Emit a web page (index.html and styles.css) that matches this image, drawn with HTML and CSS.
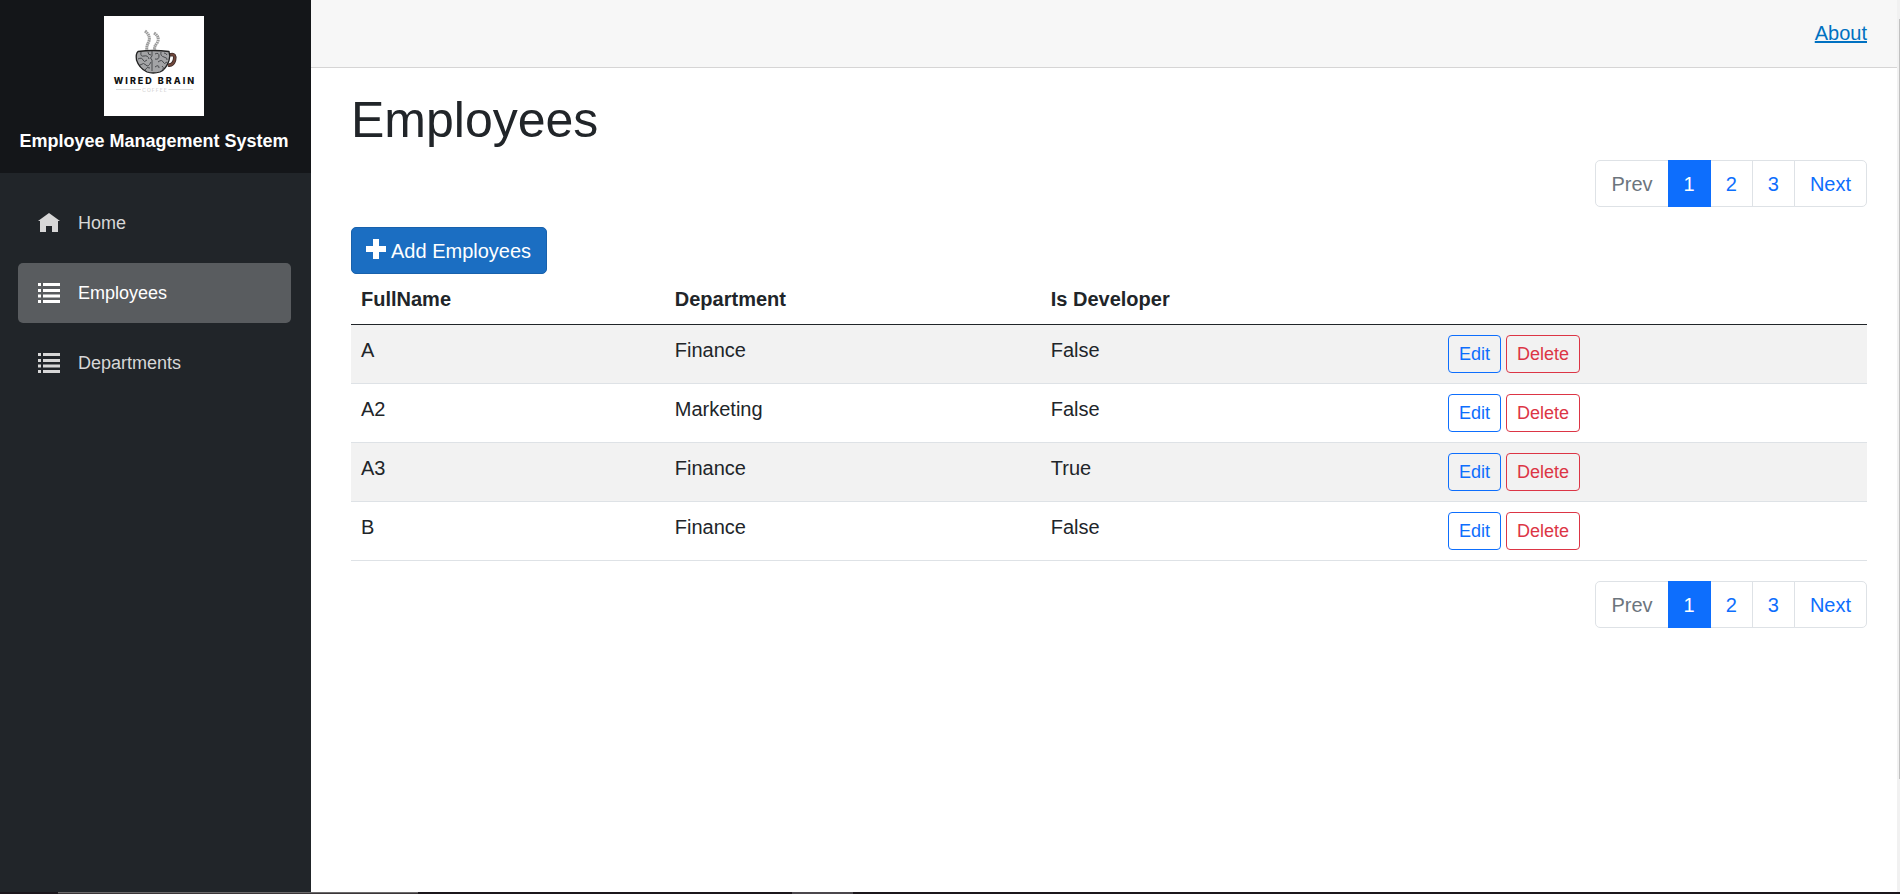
FILE: index.html
```html
<!DOCTYPE html>
<html lang="en">
<head>
<meta charset="utf-8">
<title>Employees</title>
<link rel="stylesheet" href="styles.css">
</head>
<body>
<div class="page">
  <aside class="sidebar">
    <div class="brand">
      <svg class="brand-logo" viewBox="0 0 100 100" role="img" aria-label="Wired Brain Coffee">
        <rect width="100" height="100" fill="#fff"/>
        <g fill="none" stroke="#9b9b9b" stroke-width="3" stroke-dasharray="1.6 .5">
          <path d="M41 15c4 3 5 7 4 10s-3 5-2 10"/>
          <path d="M50 17c5 3 5 7 3 10s-3 4-2 8"/>
        </g>
        <path d="M66 39c4-1.500 5.500 1 4.500 5s-3 5.500-6.500 5" fill="none" stroke="#3a2a28" stroke-width="3.600"/>
        <path d="M66 39c4-1.500 5.500 1 4.500 5s-3 5.500-6.500 5" fill="none" stroke="#70483c" stroke-width="2"/>
        <path d="M34 35.500q15-2 31 0 1.500 4 0 9-3 9-9 11.500-7 2-13 0-8-4-10.500-12-1-6 1.500-8.500z" fill="#a3a4a6" stroke="#222" stroke-width="1.300"/>
        <path d="M37 36q-1 5 3 4t5 3M34 43q4-2 5 1t4 0M36 49q4-3 6 0t5-3M41 54q2-4 5-2M48 35v5q-3 2 0 4v11M51 38q4-2 4 2t-4 3M57 36q-1 4 3 5t3 3M54 46q4-3 5 0t4 0M51 51q4-3 4 1M58 50q2 1 1 4M44 36q0 3 3 3M60 37q2 0 3 2" fill="none" stroke="#484a4d" stroke-width="1"/>
        <text class="logo-name" x="51" y="68" text-anchor="middle">WIRED BRAIN</text>
        <path d="M12 73.500h25M64.500 73.500H89" stroke="#ddd" stroke-width="1"/>
        <text class="logo-sub" x="51" y="76" text-anchor="middle">COFFEE</text>
      </svg>
      <a class="brand-title" href="#">Employee Management System</a>
    </div>
    <nav class="menu" aria-label="Main">
      <a class="menu-link" href="#">
        <svg class="menu-icon" viewBox="0 0 22 22" aria-hidden="true"><path d="M11 1 0 9h2v11h6v-6h6v6h6V9h2z"/></svg>
        Home
      </a>
      <a class="menu-link menu-link-active" href="#" aria-current="page">
        <svg class="menu-icon" viewBox="0 0 22 22" aria-hidden="true"><path d="M0 1h3v3H0zM5 1h17v3H5zM0 7h3v3H0zM5 7h17v3H5zM0 12.500h3v3H0zM5 12.500h17v3H5zM0 18h3v3H0zM5 18h17v3H5z"/></svg>
        Employees
      </a>
      <a class="menu-link" href="#">
        <svg class="menu-icon" viewBox="0 0 22 22" aria-hidden="true"><path d="M0 1h3v3H0zM5 1h17v3H5zM0 7h3v3H0zM5 7h17v3H5zM0 12.500h3v3H0zM5 12.500h17v3H5zM0 18h3v3H0zM5 18h17v3H5z"/></svg>
        Departments
      </a>
    </nav>
  </aside>
  <main class="main">
    <header class="topbar"><a class="about" href="#">About</a></header>
    <article class="content">
      <h1 class="title">Employees</h1>
      <nav class="pager" aria-label="Pages">
        <button class="pager-item" disabled>Prev</button>
        <button class="pager-item pager-item-active">1</button>
        <button class="pager-item">2</button>
        <button class="pager-item">3</button>
        <button class="pager-item">Next</button>
      </nav>
      <a class="add" href="#">
        <svg class="add-icon" viewBox="0 0 20 20" aria-hidden="true"><path d="M7 0h6v7h7v6h-7v7H7v-7H0V7h7z"/></svg>
        Add Employees
      </a>
      <table class="table">
        <colgroup><col class="col-name"><col class="col-dept"><col class="col-dev"><col></colgroup>
        <thead>
          <tr><th scope="col">FullName</th><th scope="col">Department</th><th scope="col">Is Developer</th><td></td></tr>
        </thead>
        <tbody>
          <tr><td>A</td><td>Finance</td><td>False</td><td><div class="actions"><a class="btn btn-edit" href="#">Edit</a><button class="btn btn-delete">Delete</button></div></td></tr>
          <tr><td>A2</td><td>Marketing</td><td>False</td><td><div class="actions"><a class="btn btn-edit" href="#">Edit</a><button class="btn btn-delete">Delete</button></div></td></tr>
          <tr><td>A3</td><td>Finance</td><td>True</td><td><div class="actions"><a class="btn btn-edit" href="#">Edit</a><button class="btn btn-delete">Delete</button></div></td></tr>
          <tr><td>B</td><td>Finance</td><td>False</td><td><div class="actions"><a class="btn btn-edit" href="#">Edit</a><button class="btn btn-delete">Delete</button></div></td></tr>
        </tbody>
      </table>
      <nav class="pager" aria-label="Pages, bottom">
        <button class="pager-item" disabled>Prev</button>
        <button class="pager-item pager-item-active">1</button>
        <button class="pager-item">2</button>
        <button class="pager-item">3</button>
        <button class="pager-item">Next</button>
      </nav>
    </article>
  </main>
  <div class="scroll-track"><div class="scroll-thumb"></div></div>
</div>
<div class="taskbar"><span class="task task-open"></span><span class="task task-tray"></span></div>
</body>
</html>
```

FILE: styles.css
```css
* { box-sizing: border-box; }

body {
  margin: 0;
  min-height: 100vh;
  display: flex;
  flex-direction: column;
  background: #fff;
  color: #212529;
  font: 20px/30px "Liberation Sans", Arial, sans-serif;
}

button { font: inherit; cursor: pointer; }

.page { flex: 1; display: flex; }

/* Sidebar */
.sidebar { flex: 0 0 311px; background: #212529; }

.brand {
  display: flex;
  flex-direction: column;
  align-items: center;
  gap: 10px;
  padding: 16px 3px 17px 0;
  background: #141619;
}
.brand-logo { width: 100px; height: 100px; }
.brand-title {
  color: #fff;
  font-size: 18px;
  font-weight: 700;
  text-decoration: none;
}
.logo-name { font: 800 9px Inter, sans-serif; letter-spacing: 2px; fill: #111; }
.logo-sub { font: 300 5px Inter, sans-serif; letter-spacing: 1px; fill: #bbb; }

.menu {
  display: flex;
  flex-direction: column;
  gap: 10px;
  padding: 20px 20px 0 18px;
}
.menu-link {
  display: flex;
  align-items: center;
  gap: 18px;
  height: 60px;
  padding: 0 20px;
  border-radius: 5px;
  color: #d7d7d7;
  font-size: 18px;
  text-decoration: none;
}
.menu-link-active { background: #595c5f; color: #fff; }
.menu-icon { width: 22px; height: 22px; fill: currentColor; }

/* Main area */
.main { flex: 1; }

.topbar {
  display: flex;
  justify-content: flex-end;
  padding: 18px 30px 19px;
  background: #f7f7f7;
  border-bottom: 1px solid #d6d5d5;
}
.about { color: #0071c1; }

.content { padding: 22px 30px 0 40px; }
.title { margin: 0 0 10px; font-size: 50px; line-height: 60px; font-weight: 400; }

.pager { display: flex; justify-content: flex-end; margin-bottom: 20px; }
.pager-item {
  margin-left: -1px;
  padding: 8px 15px 7px;
  background: #fff;
  border: 1px solid #dee2e6;
  color: #0d6efd;
}
.pager-item:disabled { color: #6c757d; cursor: default; }
.pager-item:first-child { border-radius: 5px 0 0 5px; }
.pager-item:last-child { border-radius: 0 5px 5px 0; }
.pager-item-active { z-index: 1; background: #0d6efd; border-color: #0d6efd; color: #fff; }

.add {
  display: inline-flex;
  gap: 5px;
  padding: 8px 15px 7px 14px;
  background: #1b6ec2;
  border: 1px solid #1861ac;
  border-radius: 5px;
  color: #fff;
  text-decoration: none;
  vertical-align: top;
}
.add-icon { width: 20px; height: 20px; margin-top: 3px; fill: currentColor; }

.table { width: 100%; margin-bottom: 20px; border-collapse: separate; border-spacing: 0; table-layout: fixed; }
.table th, .table td { padding: 10px; text-align: left; vertical-align: top; border-bottom: 1px solid #dee2e6; }
.table thead th, .table thead td { border-bottom-color: #212529; }
.table tbody tr:nth-child(odd) { background: #f2f2f2; }
.col-name { width: 20.7%; }
.col-dept { width: 24.8%; }
.col-dev { width: 26.2%; }

.actions { display: flex; gap: 5px; }
.btn {
  padding: 5px 10px;
  border: 1px solid;
  border-radius: 4px;
  background: transparent;
  font-size: 18px;
  line-height: 26px;
  text-decoration: none;
}
.btn-edit { color: #0d6efd; }
.btn-delete { color: #dc3545; }

/* Window edges */
.scroll-track { flex: 0 0 3px; padding: 19px 0 0 2px; background: #f1f1f1; }
.scroll-thumb { height: 87%; background: #c1c1c1; }

.taskbar { display: flex; height: 2px; padding-left: 58px; background: #1b161b; }
.task-open { width: 360px; background: #3a3638; border-top: 1px solid #6b696a; }
.task-tray { width: 61px; margin-left: 374px; background: #4b474c; }
```
